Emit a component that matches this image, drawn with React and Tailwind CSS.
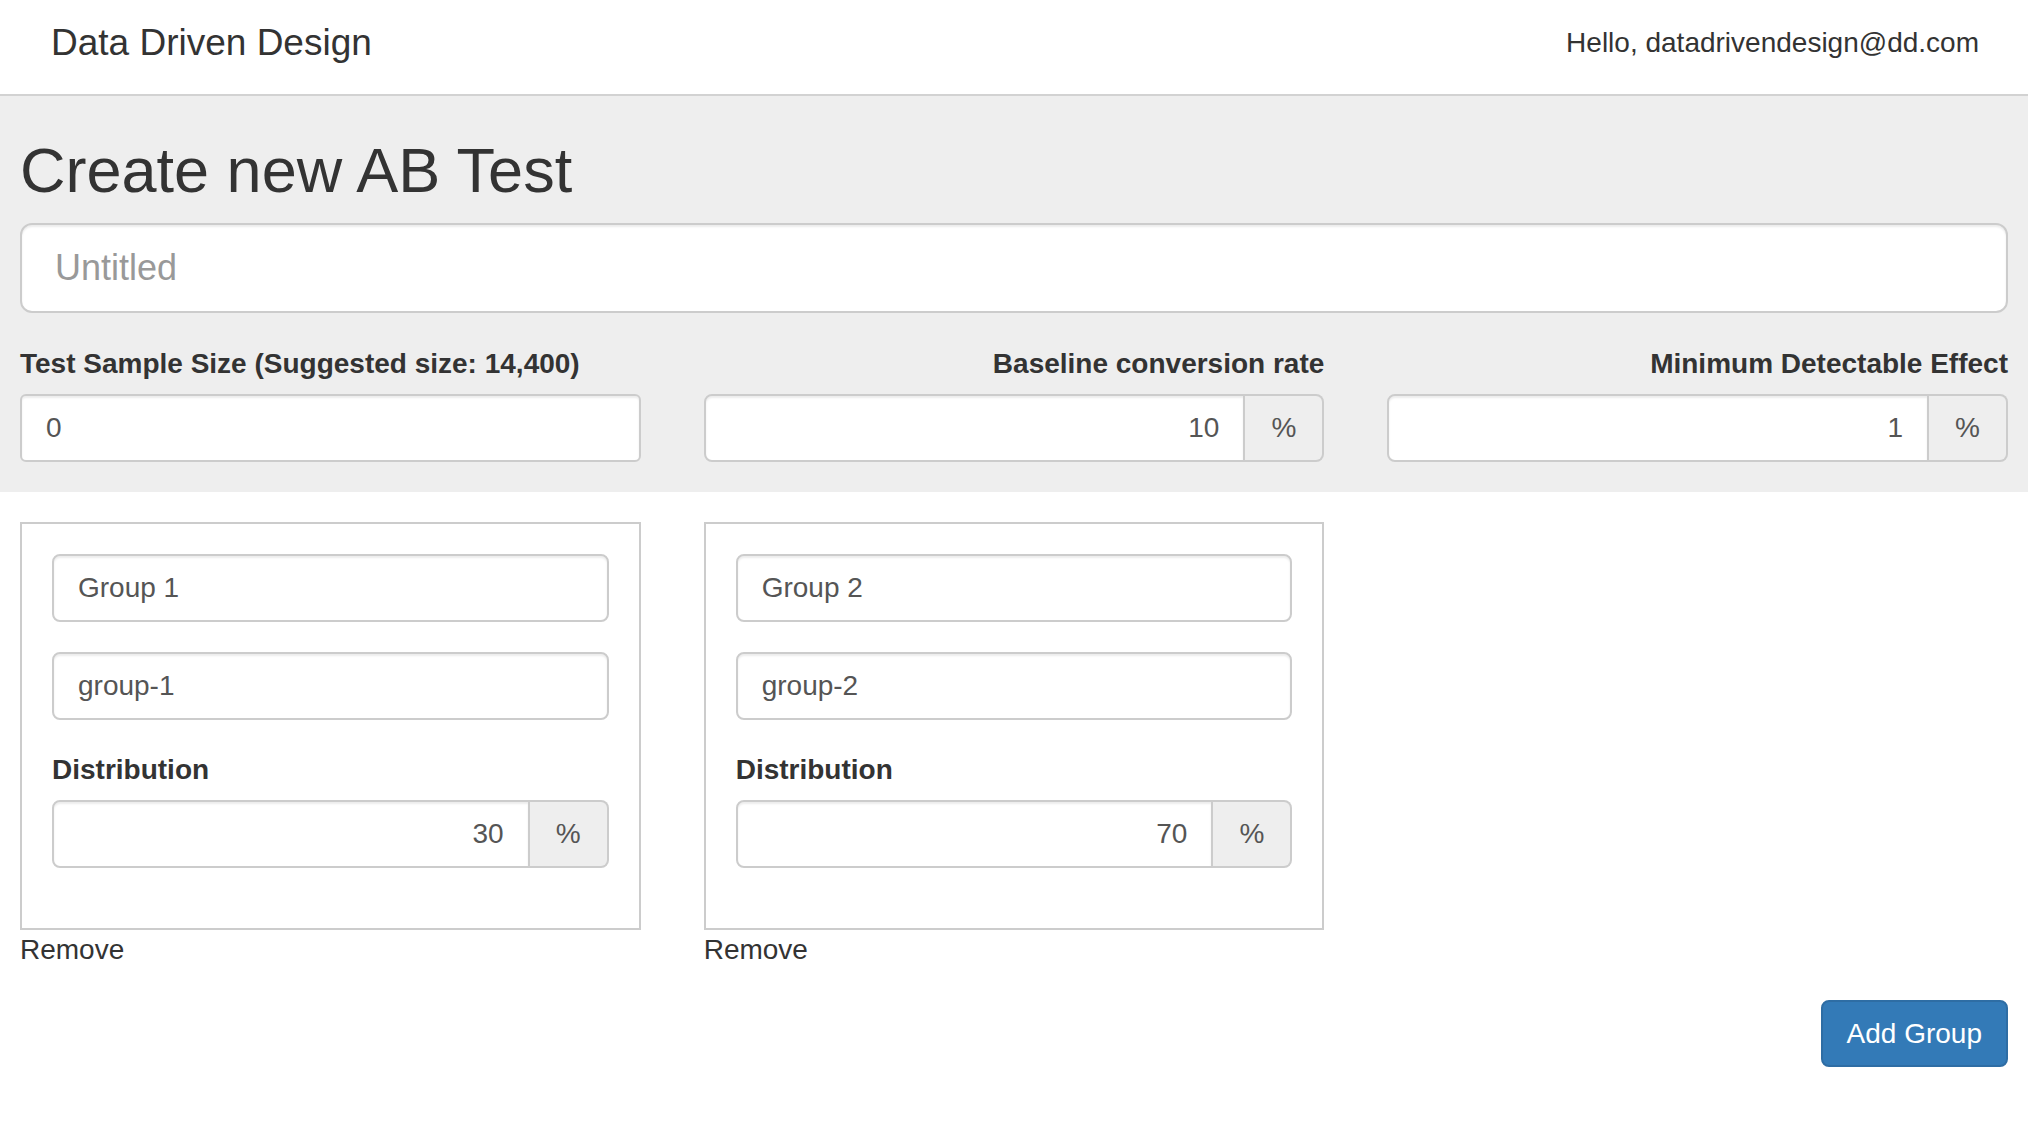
import React from "react";

const inputCls =
  "block w-full h-[68px] border-2 border-[#ccc] bg-white px-[24px] text-[28px] text-[#555] outline-none shadow-[inset_0_2px_2px_rgba(0,0,0,0.075)]";

// input with a "%" addon on the right
const PercentInput = ({ value }) => (
  <div className="flex w-full">
    <input
      className={inputCls + " rounded-l-[8px] text-right min-w-0 flex-1"}
      defaultValue={value}
    />
    <span className="flex h-[68px] w-[79px] shrink-0 items-center justify-center rounded-r-[8px] border-2 border-l-0 border-[#ccc] bg-[#eee] text-[28px] text-[#555]">
      %
    </span>
  </div>
);

const groups = [
  { name: "Group 1", slug: "group-1", dist: "30" },
  { name: "Group 2", slug: "group-2", dist: "70" },
];

const App = () => {
  return (
    <div className="min-h-screen bg-white font-['Liberation_Sans',Arial,sans-serif] text-[#333]">
      {/* Navbar */}
      <nav className="flex h-[96px] items-center justify-between border-b-2 border-[#d2d2d2] pb-[8px] pl-[51px] pr-[49px]">
        <span className="text-[37px] leading-[40px]">Data Driven Design</span>
        <span className="text-[28px] leading-[40px]">Hello, datadrivendesign@dd.com</span>
      </nav>

      {/* Test settings */}
      <section className="bg-[#eee] px-[20px] pt-[40px] pb-[30px]">
        <h1 className="text-[63px] leading-[68px] font-normal">Create new AB Test</h1>
        <input
          className="mt-[19px] block h-[90px] w-full rounded-[12px] border-2 border-[#ccc] bg-white pl-[33px] text-[36px] text-[#555] outline-none placeholder:text-[#999] shadow-[inset_0_2px_2px_rgba(0,0,0,0.075)]"
          placeholder="Untitled"
        />
        <div className="mt-[31px] grid grid-cols-3 gap-x-[63px]">
          <div>
            <label className="block text-[28px] font-bold leading-[40px]">
              Test Sample Size (Suggested size: 14,400)
            </label>
            <input className={inputCls + " mt-[10px] rounded-[6px]"} defaultValue="0" />
          </div>
          <div>
            <label className="block text-right text-[28px] font-bold leading-[40px]">
              Baseline conversion rate
            </label>
            <div className="mt-[10px]">
              <PercentInput value="10" />
            </div>
          </div>
          <div>
            <label className="block text-right text-[28px] font-bold leading-[40px]">
              Minimum Detectable Effect
            </label>
            <div className="mt-[10px]">
              <PercentInput value="1" />
            </div>
          </div>
        </div>
      </section>

      {/* Groups */}
      <section className="px-[20px] pt-[30px]">
        <div className="grid grid-cols-3 gap-x-[63px]">
          {groups.map((g) => (
            <div key={g.slug}>
              <div className="border-2 border-[#ccc] px-[30px] pt-[30px] pb-[60px]">
                <input className={inputCls + " rounded-[8px]"} defaultValue={g.name} />
                <input className={inputCls + " mt-[30px] rounded-[8px]"} defaultValue={g.slug} />
                <label className="mt-[30px] block text-[28px] font-bold leading-[40px]">
                  Distribution
                </label>
                <div className="mt-[10px]">
                  <PercentInput value={g.dist} />
                </div>
              </div>
              <div className="text-[28px] leading-[40px]">Remove</div>
            </div>
          ))}
        </div>
        <div className="mt-[30px] flex justify-end">
          <button className="h-[67px] rounded-[8px] border-2 border-[#2e6da4] bg-[#337ab7] px-[24px] text-[28px] text-white">
            Add Group
          </button>
        </div>
      </section>
    </div>
  );
};

export default App;
